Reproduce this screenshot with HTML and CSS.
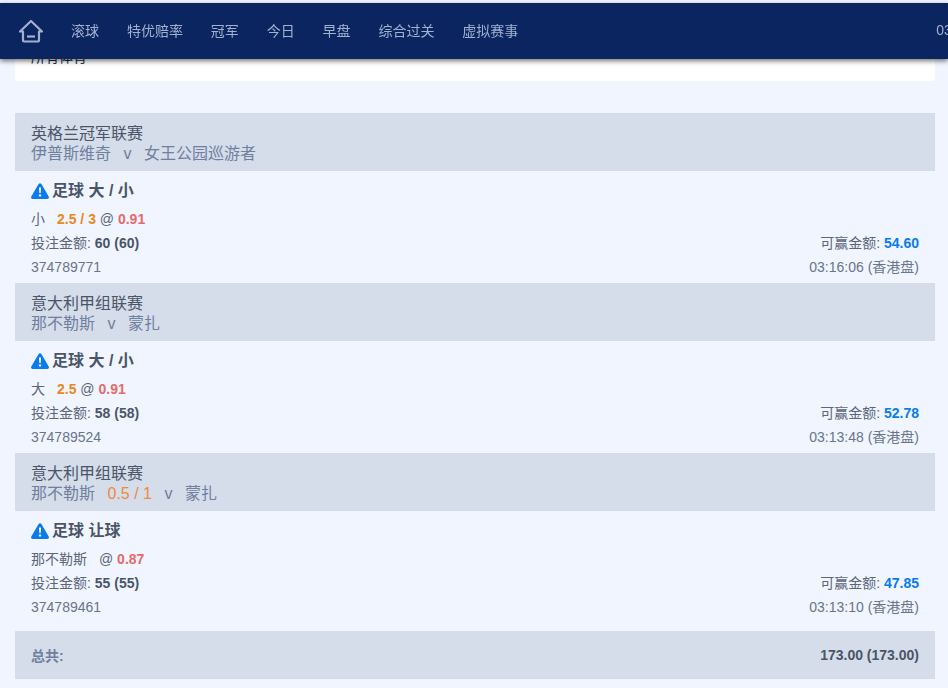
FILE: index.html
```html
<!DOCTYPE html>
<html lang="zh-CN">
<head>
  <meta charset="UTF-8">
  <meta name="viewport" content="width=device-width, initial-scale=1.0">
  <title>投注记录</title>
  <link rel="stylesheet" href="styles.css">
</head>
<body>
  <nav class="topnav">
    <svg class="home-icon" width="24" height="24" viewBox="0 0 24 24" fill="none" stroke="currentColor" stroke-width="2.2">
      <path d="M1 12.5 L12 2 L23 12.5 H20 V21.5 Q20 22.5 19 22.5 H5 Q4 22.5 4 21.5 V12.5 Z" stroke-linejoin="round"/>
      <path d="M8 17.5 H16"/>
    </svg>
    <a class="nav-item">滚球</a>
    <a class="nav-item">特优赔率</a>
    <a class="nav-item">冠军</a>
    <a class="nav-item">今日</a>
    <a class="nav-item">早盘</a>
    <a class="nav-item">综合过关</a>
    <a class="nav-item">虚拟赛事</a>
    <span class="nav-time">03</span>
  </nav>

  <main class="content">
    <div class="sport-select">
      <span>所有体育</span>
      <span class="chevron"></span>
    </div>

    <section class="bet-list">
      <div class="league-head">
        <div class="league-name">英格兰冠军联赛</div>
        <div class="teams">伊普斯维奇<span class="versus">v</span>女王公园巡游者</div>
      </div>
      <div class="bet">
        <h3 class="bet-title">
          <svg class="warn-icon" width="18" height="16" viewBox="0 0 18 16"><path d="M7.6 1 Q9 -0.6 10.4 1 L17.7 13.4 Q18.6 15.9 16.3 16 H1.7 Q-0.6 15.9 0.3 13.4 Z" fill="#0a7bea"/><path d="M8 4.5 H10 L9.7 10 H8.3 Z" fill="#fff"/><circle cx="9" cy="12.4" r="1.2" fill="#fff"/></svg>
          <span>足球 大 / 小</span>
        </h3>
        <div class="bet-row"><div>小<b class="line">2.5 / 3</b> @ <b class="odds">0.91</b></div></div>
        <div class="bet-row"><div>投注金额: <b>60 (60)</b></div><div>可赢金额: <b class="win">54.60</b></div></div>
        <div class="bet-row muted"><div>374789771</div><div>03:16:06 (香港盘)</div></div>
      </div>

      <div class="league-head">
        <div class="league-name">意大利甲组联赛</div>
        <div class="teams">那不勒斯<span class="versus">v</span>蒙扎</div>
      </div>
      <div class="bet">
        <h3 class="bet-title">
          <svg class="warn-icon" width="18" height="16" viewBox="0 0 18 16"><path d="M7.6 1 Q9 -0.6 10.4 1 L17.7 13.4 Q18.6 15.9 16.3 16 H1.7 Q-0.6 15.9 0.3 13.4 Z" fill="#0a7bea"/><path d="M8 4.5 H10 L9.7 10 H8.3 Z" fill="#fff"/><circle cx="9" cy="12.4" r="1.2" fill="#fff"/></svg>
          <span>足球 大 / 小</span>
        </h3>
        <div class="bet-row"><div>大<b class="line">2.5</b> @ <b class="odds">0.91</b></div></div>
        <div class="bet-row"><div>投注金额: <b>58 (58)</b></div><div>可赢金额: <b class="win">52.78</b></div></div>
        <div class="bet-row muted"><div>374789524</div><div>03:13:48 (香港盘)</div></div>
      </div>

      <div class="league-head">
        <div class="league-name">意大利甲组联赛</div>
        <div class="teams">那不勒斯<span class="handicap">0.5 / 1</span><span class="versus">v</span>蒙扎</div>
      </div>
      <div class="bet">
        <h3 class="bet-title">
          <svg class="warn-icon" width="18" height="16" viewBox="0 0 18 16"><path d="M7.6 1 Q9 -0.6 10.4 1 L17.7 13.4 Q18.6 15.9 16.3 16 H1.7 Q-0.6 15.9 0.3 13.4 Z" fill="#0a7bea"/><path d="M8 4.5 H10 L9.7 10 H8.3 Z" fill="#fff"/><circle cx="9" cy="12.4" r="1.2" fill="#fff"/></svg>
          <span>足球 让球</span>
        </h3>
        <div class="bet-row"><div>那不勒斯<span class="line"></span>@ <b class="odds">0.87</b></div></div>
        <div class="bet-row"><div>投注金额: <b>55 (55)</b></div><div>可赢金额: <b class="win">47.85</b></div></div>
        <div class="bet-row muted"><div>374789461</div><div>03:13:10 (香港盘)</div></div>
      </div>

      <div class="total-row">
        <b class="total-label">总共:</b>
        <b>173.00 (173.00)</b>
      </div>
    </section>
  </main>
</body>
</html>
```

FILE: styles.css
```css
body {
  margin: 0;
  padding: 0;
  height: 688px;
  overflow: hidden;
  font-family: 'Liberation Sans', 'Noto Sans CJK SC', sans-serif;
  font-size: 14px;
  color: #5b6678;
  background-color: #f1f5ff;
}

b {
  color: #4a5568;
}

/* top bar sits over the scrolled page */
.topnav {
  position: fixed;
  top: 3px;
  left: 0;
  right: 0;
  z-index: 10;
  height: 56px;
  display: flex;
  align-items: center;
  padding-left: 19px;
  white-space: nowrap;
  overflow: hidden;
  background-color: #0b2561;
  color: #a3b1cf;
  box-shadow: 0 2px 5px rgba(0, 0, 0, 0.55);
}

.home-icon {
  flex: none;
  margin-right: 28px;
}

.nav-item {
  flex: none;
  margin-right: 27.9px;
  margin-bottom: 2px;
}

.nav-time {
  flex: none;
  margin-left: 390px;
  margin-bottom: 2px;
}

.content {
  padding: 35px 13px 0 15px;
}

.sport-select {
  height: 46px;
  box-sizing: border-box;
  padding: 12px 16px 0;
  display: flex;
  justify-content: space-between;
  line-height: 20px;
  color: #1a2238;
  background-color: #fff;
  border-radius: 0 0 3px 3px;
}

.chevron {
  width: 6px;
  height: 6px;
  margin: 2px 8px 0 0;
  border-right: 1px solid #1a2238;
  border-bottom: 1px solid #1a2238;
  transform: rotate(45deg);
}

.bet-list {
  margin-top: 32px;
}

.league-head {
  height: 58px;
  box-sizing: border-box;
  padding: 11px 16px 0;
  font-size: 16px;
  line-height: 20px;
  color: #4a5568;
  background-color: #d5dcea;
}

.teams {
  color: #6f809e;
}

.versus {
  margin: 0 12.5px;
}

.handicap {
  margin-left: 12.5px;
  color: #ee8a3c;
}

.bet {
  height: 112px;
  box-sizing: border-box;
  padding: 6px 16px 0;
}

.bet-title {
  display: flex;
  align-items: center;
  gap: 3px;
  height: 28px;
  margin: 0 0 2px;
  font-size: 16px;
  font-weight: bold;
  line-height: 28px;
  color: #4a5568;
}

.warn-icon {
  flex: none;
}

.bet-row {
  display: flex;
  justify-content: space-between;
  height: 24px;
  line-height: 24px;
}

.muted {
  color: #697488;
}

.line {
  margin-left: 12px;
  color: #e8891c;
}

.odds {
  color: #e56b6b;
}

.win {
  color: #0a7bea;
}

.total-row {
  display: flex;
  justify-content: space-between;
  align-items: center;
  height: 48px;
  margin-top: 8px;
  padding: 0 16px;
  box-sizing: border-box;
  background-color: #d5dcea;
}

.total-row .total-label {
  color: #6f809e;
}
```
